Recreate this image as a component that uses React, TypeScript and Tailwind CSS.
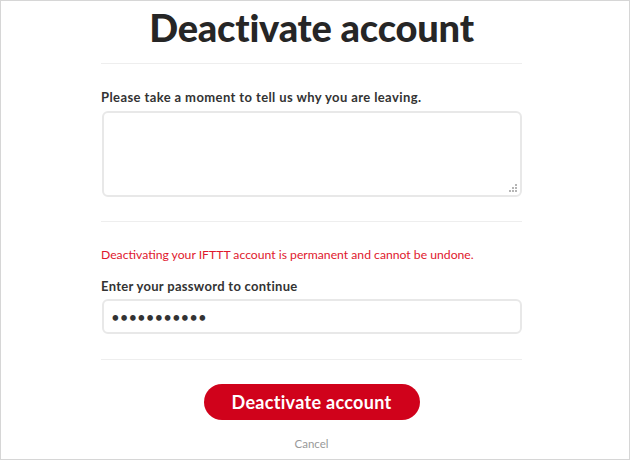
import { useState } from 'react';

function ResizeGrip() {
    // dotted triangle grip in the textarea corner
    const dots = [
        [8, 0], [8, 3], [5, 3], [8, 6], [5, 6], [2, 6],
    ];
    return (
        <svg className="absolute right-[5px] bottom-[5px] pointer-events-none" width="10" height="8" viewBox="0 0 10 8">
            {dots.map(([x, y], i) => (
                <rect key={i} x={x} y={y} width="2" height="2" fill="#b5b5b5" />
            ))}
        </svg>
    );
}

export default function App() {
    const [reason, setReason] = useState('');
    const [password, setPassword] = useState('abcdefghijk');

    return (
        <div className="w-[630px] h-[460px] bg-white border border-[#d6d6d6] overflow-hidden font-['Lato','Liberation_Sans',sans-serif] text-[#222]">
            <div className="ml-[100px] w-[421px] flex flex-col">
                <h1 className="text-center text-[38px] leading-[48px] font-black tracking-[-0.2px] text-[#262626] pt-[2px] pb-[12px]">
                    Deactivate account
                </h1>
                <hr className="border-0 h-px bg-[#eeeeee]" />

                <label className="mt-[25px] text-[13px] leading-[16px] font-bold tracking-[0.4px] text-[#333]">
                    Please take a moment to tell us why you are leaving.
                </label>
                <div className="relative mt-[6px] ml-px">
                    <textarea
                        value={reason}
                        onChange={(e) => setReason(e.target.value)}
                        className="block w-[420px] h-[86px] border-2 border-[#e8e8e8] rounded-[6px] resize-none outline-none px-3 py-2 text-[14px]"
                    />
                    <ResizeGrip />
                </div>

                <hr className="mt-[24px] border-0 h-px bg-[#eeeeee]" />

                <p className="mt-[25px] text-[12.2px] leading-[16px] text-[#e0182d]">
                    Deactivating your IFTTT account is permanent and cannot be undone.
                </p>
                <label className="mt-[15px] text-[13px] leading-[16px] font-bold tracking-[0.3px] text-[#333]">
                    Enter your password to continue
                </label>
                <input
                    type="password"
                    value={password}
                    onChange={(e) => setPassword(e.target.value)}
                    className="mt-[5px] ml-px w-[420px] h-[35px] border-2 border-[#e8e8e8] rounded-[6px] outline-none px-[7px] text-[15px] text-[#333]"
                />

                <hr className="mt-[25px] border-0 h-px bg-[#eeeeee]" />

                <div className="mt-[24px] flex justify-center">
                    <button className="w-[216px] h-[36px] rounded-full bg-[#d0021b] text-white text-[18px] font-bold tracking-[0.3px]">
                        Deactivate account
                    </button>
                </div>
                <button className="mt-[17px] self-center text-[11.5px] leading-[14px] text-[#999]">
                    Cancel
                </button>
            </div>
        </div>
    );
}
